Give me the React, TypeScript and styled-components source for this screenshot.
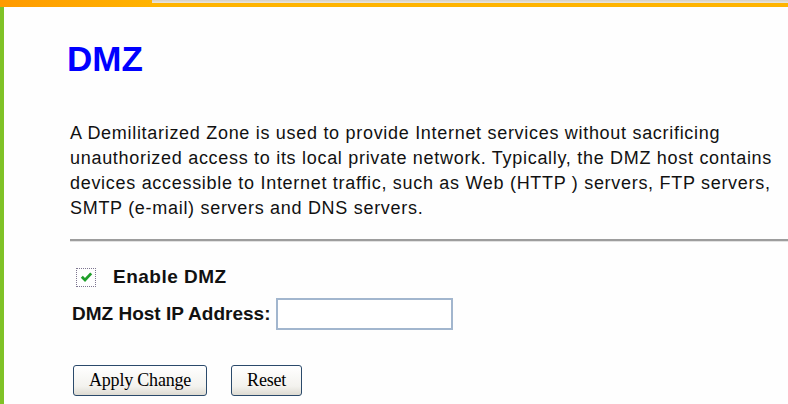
import styled, { createGlobalStyle } from 'styled-components'
import { useState } from 'react'

const GlobalStyle = createGlobalStyle`
	html, body {
		margin: 0;
		padding: 0;
		background: #fefefe;
	}
	body {
		font-family: "Liberation Sans", Arial, sans-serif;
		color: #111;
	}
`

export default function App(): JSX.Element {

	// form values
	const [enabled, setEnabled] = useState(true)
	const [hostIp, setHostIp] = useState("")

	return (
		<Page>
			<GlobalStyle />

			<TopBar>
				<Tab />
				<TopRest />
			</TopBar>

			<Main>
				<Title>DMZ</Title>

				<Intro>
					A Demilitarized Zone is used to provide Internet services without sacrificing
					unauthorized access to its local private network. Typically, the DMZ host contains
					devices accessible to Internet traffic, such as Web (HTTP ) servers, FTP servers,
					SMTP (e-mail) servers and DNS servers.
				</Intro>

				<Divider />

				<Form onSubmit={(e) => e.preventDefault()}>
					<CheckRow onClick={() => setEnabled(!enabled)}>
						<CheckBox>
							<CheckInner>
								{enabled && (
									<svg width="13" height="12" viewBox="0 0 13 12">
										<path d="M1.8 5.8 L5 9 L11.2 2.4" fill="none" stroke="#1f9f2a" strokeWidth="2.8" />
									</svg>
								)}
							</CheckInner>
						</CheckBox>
						<BoldLabel $spacing={0.5}>Enable DMZ</BoldLabel>
					</CheckRow>

					<FieldRow>
						<BoldLabel $spacing={0}>DMZ Host IP Address:</BoldLabel>
						<TextInput type="text" value={hostIp} onChange={(e) => setHostIp(e.target.value)} />
					</FieldRow>

					<Buttons>
						<Button type="submit">Apply Change</Button>
						<Button type="reset" onClick={() => setHostIp("")}>Reset</Button>
					</Buttons>
				</Form>
			</Main>
		</Page>
	)
}

const Page = styled.div`
	display: flex;
	flex-direction: column;
	width: 788px;
	height: 404px;
	overflow: hidden;
`
const TopBar = styled.div`
	display: flex;
	height: 7px;
	flex-shrink: 0;
`
const Tab = styled.div`
	width: 152px;
	background: linear-gradient(to right, #ff9a00, #ffb300);
`
const TopRest = styled.div`
	flex: 1;
	background: linear-gradient(to bottom, #d6d0c6 0px, #e9e6df 3px, #ffb400 3px, #ffb400 7px);
`
const Main = styled.main`
	flex: 1;
	border-left: 4px solid #7fc226;
	padding-left: 66px;
`
const Title = styled.h1`
	margin: 35px 0 0 -3px;
	font-size: 35px;
	line-height: 34px;
	font-weight: bold;
	color: #0000ff;
`
const Intro = styled.p`
	margin: 45px 0 0;
	width: 716px;
	font-size: 18px;
	line-height: 25px;
	letter-spacing: 0.7px;
	color: #111;
`
const Divider = styled.hr`
	margin: 18px 0 0;
	border: none;
	border-top: 2px solid #9d9d9d;
	border-bottom: 1px solid #e2e2e2;
`
const Form = styled.form`
	display: flex;
	flex-direction: column;
`
const CheckRow = styled.div`
	display: flex;
	align-items: center;
	gap: 17px;
	margin-top: 24px;
	padding-left: 6px;
	cursor: pointer;
`
const CheckBox = styled.span`
	display: flex;
	align-items: center;
	justify-content: center;
	width: 20px;
	height: 19px;
	box-sizing: border-box;
	border: 1px dotted #7d7590;
`
const CheckInner = styled.span`
	display: flex;
	align-items: center;
	justify-content: center;
	width: 14px;
	height: 13px;
	background: #fff;
`
const BoldLabel = styled.span<{ $spacing: number }>`
	font-size: 19px;
	font-weight: bold;
	letter-spacing: ${(p) => p.$spacing}px;
	color: #111;
`
const FieldRow = styled.div`
	display: flex;
	align-items: center;
	gap: 6px;
	margin-top: 10px;
	padding-left: 2px;
`
const TextInput = styled.input`
	width: 177px;
	height: 32px;
	box-sizing: border-box;
	border: 2px solid #a2b6ce;
	background: #fff;
	outline: none;
	font-size: 16px;
`
const Buttons = styled.div`
	display: flex;
	gap: 24px;
	margin-top: 35px;
	padding-left: 3px;
`
const Button = styled.button`
	height: 31px;
	padding: 0 15px;
	border: 1px solid #2b4a6b;
	border-radius: 3px;
	background: linear-gradient(to bottom, #ffffff, #f3f2ee 70%, #dedbd2);
	font-family: "Liberation Serif", "Times New Roman", serif;
	font-size: 18px;
	letter-spacing: -0.2px;
	color: #000;
	cursor: pointer;
`
